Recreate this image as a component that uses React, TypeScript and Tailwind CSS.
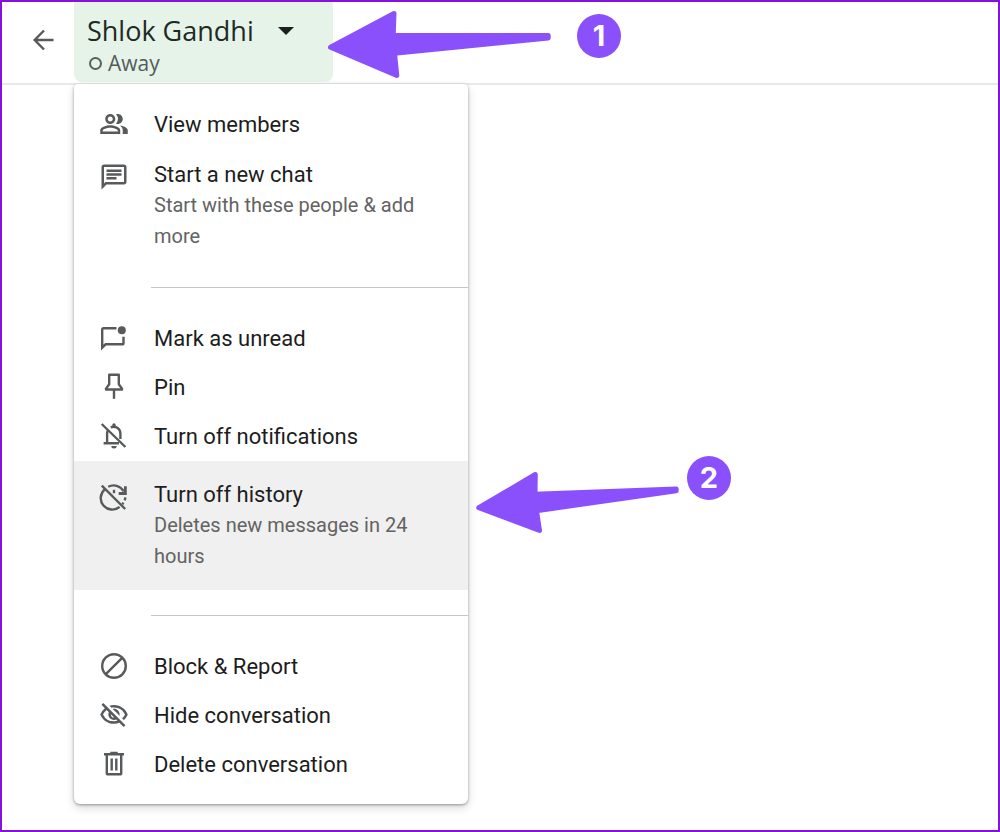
import React, { useState } from 'react';
import { MdOutlinePeopleAlt, MdOutlineChat, MdOutlineVisibilityOff } from 'react-icons/md';

type MenuItem = {
  label: string;
  description?: string;
  icon: React.ReactNode;
  className?: string;
};

function StrokeIcon({ children }: { children: React.ReactNode }) {
  return (
    <svg
      viewBox="0 0 32 32"
      className="size-8"
      fill="none"
      stroke="currentColor"
      strokeWidth="2.4"
      aria-hidden="true"
    >
      {children}
    </svg>
  );
}

const groups: MenuItem[][] = [
  [
    { label: 'View members', icon: <MdOutlinePeopleAlt size={30} />, className: 'py-[9px]' },
    {
      label: 'Start a new chat',
      description: 'Start with these people & add more',
      icon: <MdOutlineChat size={30} />,
      className: 'py-2.5',
    },
  ],
  [
    {
      label: 'Mark as unread',
      className: 'py-[9px]',
      icon: (
        <StrokeIcon>
          <path d="M18.5 6.3H5.6q-1.4 0-1.4 1.4v18l3.4-3.4h16.5q1.4 0 1.4-1.4v-6.2" />
          <circle cx="23.8" cy="8.2" r="4" fill="currentColor" stroke="none" />
        </StrokeIcon>
      ),
    },
    {
      label: 'Pin',
      className: 'py-[9px]',
      icon: (
        <StrokeIcon>
          <path d="M11.2 3.8h9.6v9.4l3.2 4.4v.9H8v-.9l3.2-4.4z" strokeLinejoin="round" />
          <path d="M16 18.5v9.3" />
        </StrokeIcon>
      ),
    },
    {
      label: 'Turn off notifications',
      className: 'py-[9px]',
      icon: (
        <StrokeIcon>
          <path d="M3.7 4 27.4 27" />
          <path d="M9.6 10.8c-.4 1-.5 2-.5 3.2v9.2M5.6 23.2H21" />
          <path d="M12.7 7.4c4.6-2 9.7 1 9.7 6.4V19" />
          <path d="M16 5v1.5" strokeWidth="3.4" strokeLinecap="round" />
          <path d="M13.3 25.9h5.4a2.7 2.5 0 0 1-5.4 0z" fill="currentColor" stroke="none" />
        </StrokeIcon>
      ),
    },
    {
      label: 'Turn off history',
      description: 'Deletes new messages in 24 hours',
      className: 'py-[18px] bg-[#f0f0f0]',
      icon: (
        <StrokeIcon>
          <path d="M3.8 4.6 27.2 28" />
          <path d="M6.8 8.4A11.4 11.4 0 0 0 21.6 25.9" />
          <path d="M10.2 5.8C15.6 2.9 22.3 4.5 25.8 10.4" />
          <path d="M27.4 5.2v7.3h-6.7" strokeWidth="2.8" />
          <path d="M16 8.8v3.4" />
          <path d="M27.3 16.4q-.1 1.7-.6 3M25.4 21.7l-1 1.6" />
        </StrokeIcon>
      ),
    },
  ],
  [
    {
      label: 'Block & Report',
      className: 'py-[9px]',
      icon: (
        <StrokeIcon>
          <circle cx="16" cy="16" r="11.8" />
          <path d="M7.8 24.2 24.2 7.8" />
        </StrokeIcon>
      ),
    },
    { label: 'Hide conversation', icon: <MdOutlineVisibilityOff size={30} />, className: 'py-[9px]' },
    {
      label: 'Delete conversation',
      className: 'py-[9px]',
      icon: (
        <StrokeIcon>
          <path d="M6 6.3h20M12.3 5h7.4" />
          <path d="M8.8 6.3v18.6q0 1.4 1.4 1.4h11.6q1.4 0 1.4-1.4V6.3" />
          <path d="M13.7 10.5v12M18.3 10.5v12" />
        </StrokeIcon>
      ),
    },
  ],
];

function MenuRow({ item }: { item: MenuItem }) {
  return (
    <button
      type="button"
      role="menuitem"
      className={`flex w-full items-start gap-6 pl-6 pr-10 text-left ${item.className}`}
    >
      <span
        className={`flex size-8 shrink-0 items-center justify-center text-[#57595b] ${
          item.description ? 'mt-0.5' : '-mt-px'
        }`}
      >
        {item.icon}
      </span>
      <span className="block">
        <span className="block text-[22px] leading-[31px] text-[#1d1d1d]">{item.label}</span>
        {item.description && (
          <span className="block text-[20px] leading-[31px] text-[#636363]">{item.description}</span>
        )}
      </span>
    </button>
  );
}

function Badge({ value, className }: { value: number; className: string }) {
  return (
    <span
      className={`absolute flex size-11 items-center justify-center rounded-full bg-[#8a50fc] pb-0.5 font-['Inter',sans-serif] text-[29px] font-bold leading-none text-white ${className}`}
    >
      {value}
    </span>
  );
}

export default function App() {
  const [open, setOpen] = useState(true);

  return (
    <div className="relative min-h-screen border-2 border-[#8512dc] bg-white font-['Roboto',sans-serif]">
      <header className="flex items-start border-b-2 border-[#e9e9e9] pb-px">
        <button type="button" aria-label="Back" className="ml-6 mt-5 p-0.5 text-[#57595b]">
          <svg viewBox="0 0 32 32" className="size-8" fill="none" stroke="currentColor" strokeWidth="2.4">
            <path d="M25.5 16H7.5M16 6.5 6.7 16 16 25.5" />
          </svg>
        </button>

        <div className="relative ml-3">
          <button
            type="button"
            aria-haspopup="menu"
            aria-expanded={open}
            onClick={() => setOpen(!open)}
            className="block w-[259px] rounded-b-lg bg-[#e5f3e9] px-[13px] pb-1 pt-[11px] text-left font-['Open_Sans',sans-serif] font-medium"
          >
            <span className="flex items-center gap-6">
              <span className="text-[27px] leading-9 text-[#1f2a24]">Shlok Gandhi</span>
              <svg viewBox="0 0 16 8" className="h-2 w-4" fill="#1b1f1d" aria-hidden="true">
                <path d="M0 0h16L8 8z" />
              </svg>
            </span>
            <span className="flex items-center gap-1.5 px-0.5">
              <span className="size-[13px] rounded-full border-2 border-[#57605b]" />
              <span className="text-[21px] leading-[29px] text-[#545c58]">Away</span>
            </span>
          </button>

          {/* Conversation menu */}
          {open && (
            <div
              role="menu"
              className="absolute left-0 top-full z-10 mt-0.5 w-[394px] rounded-b-md rounded-t-sm bg-white pb-[15px] pt-4 shadow-[0_1px_3px_rgba(0,0,0,0.35),0_4px_10px_rgba(0,0,0,0.15)]"
            >
              {groups.map((group, index) => (
                <React.Fragment key={index}>
                  {index > 0 && <hr className="mb-[26px] ml-[77px] mt-[25px] border-[#c6c6c6]" />}
                  {group.map((item) => (
                    <MenuRow key={item.label} item={item} />
                  ))}
                </React.Fragment>
              ))}
            </div>
          )}
        </div>
      </header>

      {/* Step markers */}
      <svg
        viewBox="0 0 226 70"
        className="absolute left-[324px] top-[7px] z-20 h-[70px] w-[226px]"
        fill="#8a50fc"
        stroke="#8a50fc"
        strokeWidth="5"
        strokeLinejoin="round"
        aria-hidden="true"
      >
        <path d="M4.5 38.2 68 4.5 67.2 26.4 222.2 26.5 222.2 29 68.5 44.2 70.8 66.5z" />
      </svg>
      <Badge value={1} className="left-[575px] top-3" />

      <svg
        viewBox="0 0 206 66"
        className="absolute left-[472px] top-[468px] z-20 h-[66px] w-[206px]"
        fill="#8a50fc"
        stroke="#8a50fc"
        strokeWidth="5"
        strokeLinejoin="round"
        aria-hidden="true"
      >
        <path d="M4.8 37.7 61.3 4.5 61 24.3 202.2 19 202.2 20.7 62.5 40.7 65.5 60.5z" />
      </svg>
      <Badge value={2} className="left-[685px] top-[454px]" />
    </div>
  );
}
